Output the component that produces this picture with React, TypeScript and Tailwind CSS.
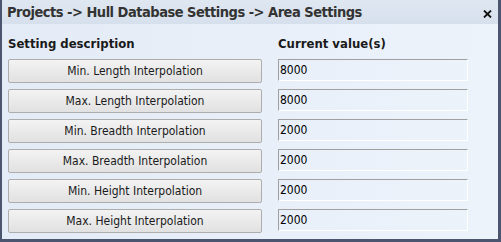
import React from "react";

const rows = [
  { label: "Min. Length Interpolation", value: "8000" },
  { label: "Max. Length Interpolation", value: "8000" },
  { label: "Min. Breadth Interpolation", value: "2000" },
  { label: "Max. Breadth Interpolation", value: "2000" },
  { label: "Min. Height Interpolation", value: "2000" },
  { label: "Max. Height Interpolation", value: "2000" },
];

export default function App() {
  return (
    <div
      className="w-[501px] h-[242px] flex flex-col bg-[#e6eef8] border-l-2 border-r-[3px] border-b-[3px] border-[#4b5570] text-[#1a1a1a]"
      style={{ fontFamily: '"DejaVu Sans Condensed", "DejaVu Sans", sans-serif' }}
    >
      <div className="h-[24px] flex items-center justify-between pl-[5px] pr-[6px] bg-gradient-to-b from-[#dfe7f1] to-[#d6e0ec]">
        <span className="text-[14.5px] font-bold text-[#333] tracking-[-0.5px] mt-[1px]">Projects -&gt; Hull Database Settings -&gt; Area Settings</span>
        <svg width="9" height="8" viewBox="0 0 9 8" className="mt-[3px]">
          <path d="M1 0.5 L8 7.5 M8 0.5 L1 7.5" stroke="#111" strokeWidth="1.8" />
        </svg>
      </div>
      <div className="flex-1 bg-gradient-to-r from-[#e3ebf6] to-[#edf3fb] pl-[6px] pt-[12px]">
        <div className="grid grid-cols-[254px_190px] gap-x-[16px] gap-y-[6px]">
          <div className="text-[13px] font-bold leading-[15px] mb-[2px]">Setting description</div>
          <div className="text-[13px] font-bold leading-[15px] mb-[2px]">Current value(s)</div>
          {rows.map((r, i) => (
            <React.Fragment key={i}>
              <button className="h-[24px] text-[12px] text-[#1a1a1a] rounded-[2px] border border-[#adadad] bg-gradient-to-b from-[#f3f3f3] to-[#e1e1e1]">
                {r.label}
              </button>
              <div className="h-[22px] border-t border-l border-t-[#a0a0a0] border-l-[#a0a0a0] border-b border-r border-b-white border-r-white text-[12px] text-black pl-[1px] leading-[20px]">
                {r.value}
              </div>
            </React.Fragment>
          ))}
        </div>
      </div>
    </div>
  );
}
